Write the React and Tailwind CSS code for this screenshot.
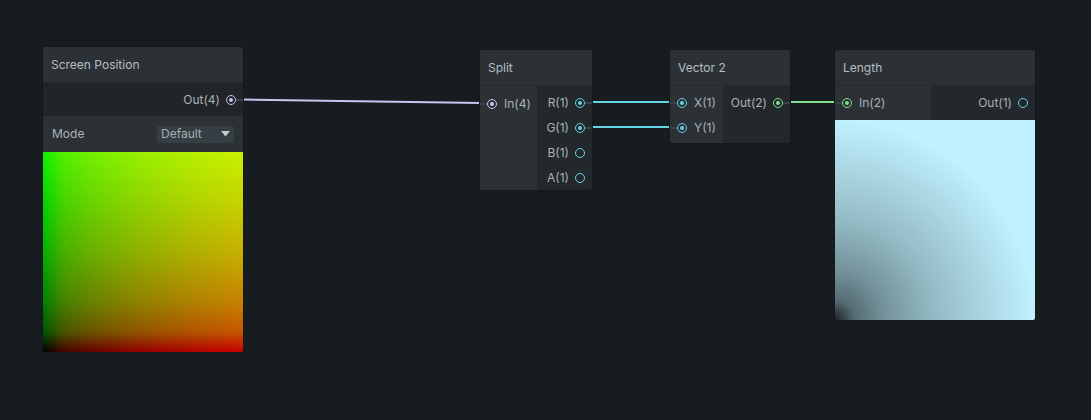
const COLORS = {
  v4: '#c6c6ee',
  v1: '#62d4e4',
  v2: '#82e08e',
};

function Port({ color, filled }) {
  return (
    <span
      className="relative flex h-[10px] w-[10px] shrink-0 items-center justify-center rounded-full border-[1.5px]"
      style={{ borderColor: color }}
    >
      {filled && (
        <span
          className="h-[4px] w-[4px] rounded-full"
          style={{ backgroundColor: color }}
        />
      )}
    </span>
  );
}

function Stub({ show }) {
  return (
    <span
      className={`h-[2px] w-[7px] shrink-0 ${show ? 'bg-[#3a4246]' : 'bg-transparent'}`}
    />
  );
}

function InRow({ label, color, filled, h = 'h-[25px]' }) {
  return (
    <div className={`flex items-center ${h}`}>
      <Stub show={filled} />
      <Port color={color} filled={filled} />
      <span className="ml-[7px]">{label}</span>
    </div>
  );
}

function OutRow({ label, color, filled, h = 'h-[25px]' }) {
  return (
    <div className={`flex items-center justify-end ${h}`}>
      <span className="mr-[6px]">{label}</span>
      <Port color={color} filled={filled} />
      <Stub show={filled} />
    </div>
  );
}

function Header({ title }) {
  return (
    <div className="flex h-[36px] items-center border-b border-[#23292c] bg-[#2b3135] px-2 text-[#b6bec2]">
      {title}
    </div>
  );
}

export default function App() {
  return (
    <div
      className="relative h-[420px] w-[1091px] overflow-hidden bg-[#171c20] text-[12px] text-[#aab2b6]"
      style={{ fontFamily: 'Inter, "Noto Sans", sans-serif' }}
    >
      {/* wires */}
      <svg className="absolute inset-0" width="1091" height="420">
        <line x1="243" y1="99.5" x2="481" y2="103" stroke={COLORS.v4} strokeWidth="2" />
        <line x1="592" y1="102" x2="670" y2="102" stroke={COLORS.v1} strokeWidth="2" />
        <line x1="592" y1="127" x2="670" y2="127" stroke={COLORS.v1} strokeWidth="2" />
        <line x1="790" y1="102" x2="835" y2="102" stroke={COLORS.v2} strokeWidth="2" />
      </svg>

      {/* Screen Position */}
      <div className="absolute left-[43px] top-[47px] w-[200px] overflow-hidden rounded-[2px] shadow-[0_0_0_1px_#14181b]">
        <Header title="Screen Position" />
        <div className="bg-[#1f2528]">
          <OutRow label="Out(4)" color={COLORS.v4} filled h="h-[33px]" />
        </div>
        <div className="flex h-[36px] items-center justify-between bg-[#2b3135] pl-[9px] pr-[9px]">
          <span>Mode</span>
          <div className="flex h-[17px] w-[77px] items-center justify-between rounded-[2px] bg-[#353e42] pl-[4px] pr-[4px] text-[#a4aeb2]">
            <span>Default</span>
            <svg width="9" height="6" viewBox="0 0 9 6">
              <path d="M0 0 L9 0 L4.5 5.5 Z" fill="#c4ccd0" />
            </svg>
          </div>
        </div>
        <div className="h-[200px] w-[200px] bg-[linear-gradient(to_right,#000_0%,#460000_10%,#6b0000_25%,#930000_50%,#b00000_75%,#c80000_100%),linear-gradient(to_top,#000_0%,#005400_10%,#008100_25%,#00b000_50%,#00d300_75%,#10f000_100%)] bg-blend-screen" />
      </div>

      {/* Split */}
      <div className="absolute left-[480px] top-[50px] w-[112px] overflow-hidden rounded-[2px] shadow-[0_0_0_1px_#14181b]">
        <Header title="Split" />
        <div className="flex h-[104px]">
          <div className="w-[57px] bg-[#2b3135] pt-[5px]">
            <InRow label="In(4)" color={COLORS.v4} filled />
          </div>
          <div className="flex-1 bg-[#22282b] pt-[4px]">
            <OutRow label="R(1)" color={COLORS.v1} filled />
            <OutRow label="G(1)" color={COLORS.v1} filled />
            <OutRow label="B(1)" color={COLORS.v1} />
            <OutRow label="A(1)" color={COLORS.v1} />
          </div>
        </div>
      </div>

      {/* Vector 2 */}
      <div className="absolute left-[670px] top-[50px] w-[120px] overflow-hidden rounded-[2px] shadow-[0_0_0_1px_#14181b]">
        <Header title="Vector 2" />
        <div className="flex h-[57px]">
          <div className="w-[53px] bg-[#2b3135] pt-[4px]">
            <InRow label="X(1)" color={COLORS.v1} filled />
            <InRow label="Y(1)" color={COLORS.v1} filled />
          </div>
          <div className="flex-1 bg-[#22282b] pt-[4px]">
            <OutRow label="Out(2)" color={COLORS.v2} filled />
          </div>
        </div>
      </div>

      {/* Length */}
      <div className="absolute left-[835px] top-[50px] w-[200px] overflow-hidden rounded-[2px] shadow-[0_0_0_1px_#14181b]">
        <Header title="Length" />
        <div className="flex h-[34px]">
          <div className="flex w-[96px] items-center bg-[#2b3135]">
            <InRow label="In(2)" color={COLORS.v2} filled />
          </div>
          <div className="flex flex-1 items-center justify-end bg-[#22282b]">
            <OutRow label="Out(1)" color={COLORS.v1} />
          </div>
        </div>
        <div className="h-[200px] w-[200px] bg-[radial-gradient(circle_at_0%_100%,#1c2428_0px,#566c73_20px,#74929b_50px,#94bbc5_100px,#abd6e2_150px,#bff1fe_200px)]" />
      </div>
    </div>
  );
}
